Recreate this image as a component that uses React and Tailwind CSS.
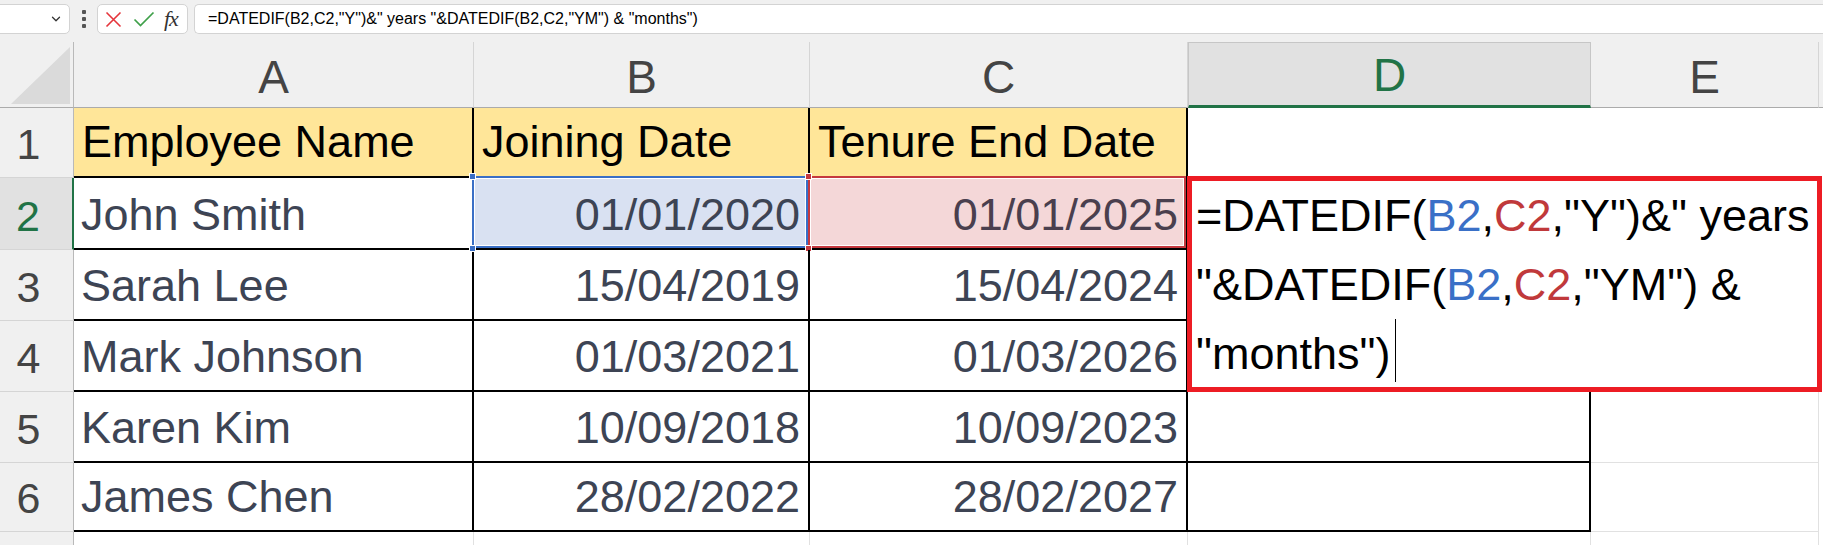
import React from "react";
import { ChevronDown } from "lucide-react";

// Sheet data: name, joining date, tenure end date
const ROWS = [
  ["John Smith", "01/01/2020", "01/01/2025"],
  ["Sarah Lee", "15/04/2019", "15/04/2024"],
  ["Mark Johnson", "01/03/2021", "01/03/2026"],
  ["Karen Kim", "10/09/2018", "10/09/2023"],
  ["James Chen", "28/02/2022", "28/02/2027"],
];

const FORMULA = '=DATEDIF(B2,C2,"Y")&" years "&DATEDIF(B2,C2,"YM") & "months")';

function FormulaBar() {
  return (
    <div className="h-[42px] bg-[#f0f0f0] flex items-start pt-[4px] gap-0">
      <div className="-ml-[6px] w-[76px] h-[30px] bg-white border border-[#d3d3d3] rounded-[5px] flex items-center justify-end pr-[6px]">
        <ChevronDown size={14} strokeWidth={2.2} className="text-[#333]" />
      </div>
      <div className="w-[27px] h-[30px] flex flex-col items-center justify-center gap-[3px]">
        <span className="w-[4px] h-[4px] rounded-[1px] bg-[#555]" />
        <span className="w-[4px] h-[4px] rounded-[1px] bg-[#555]" />
        <span className="w-[4px] h-[4px] rounded-[1px] bg-[#555]" />
      </div>
      <div className="w-[91px] h-[30px] bg-white border border-[#d3d3d3] rounded-[5px] flex items-center pl-[6px]">
        <svg width="17" height="17" viewBox="0 0 17 17" className="ml-[1px]">
          <path d="M1.5 1.5 L15.5 15.5 M15.5 1.5 L1.5 15.5" stroke="#e5353c" strokeWidth="1.6" fill="none" />
        </svg>
        <svg width="22" height="16" viewBox="0 0 22 16" className="ml-[11px]">
          <path d="M1.5 8.5 L7.5 14.5 L20.5 1.5" stroke="#3fa04a" strokeWidth="1.7" fill="none" />
        </svg>
        <span className="ml-[9px] font-['Liberation_Serif',serif] italic text-[22px] leading-none text-[#333] tracking-[-1px]">
          fx
        </span>
      </div>
      <div className="ml-[6px] flex-1 h-[30px] bg-white border border-[#d3d3d3] border-r-0 rounded-l-[5px] flex items-center pl-[13px]">
        <span className="text-[16px] text-black whitespace-nowrap">{FORMULA}</span>
      </div>
    </div>
  );
}

function ColHeader({ letter, active }) {
  return (
    <div
      className={`flex items-end justify-center pb-[4px] text-[46px] leading-[52px] ${
        active
          ? "bg-[#e1e1e1] text-[#217346] border-t border-x border-[#c6c6c6] border-b-[3px] border-b-[#217346]"
          : "bg-[#f0f0f0] text-[#444] border-r border-r-[#d5d5d5] border-b border-b-[#ababab]"
      }`}
    >
      {letter}
    </div>
  );
}

function RowHeader({ n, active }) {
  return (
    <div
      className={`flex items-end justify-center pr-[16px] pb-[7px] text-[43px] leading-[52px] border-b border-b-[#d5d5d5] ${
        active
          ? "bg-[#e1e1e1] text-[#217346] border-r-2 border-r-[#217346]"
          : "bg-[#f0f0f0] text-[#444] border-r border-r-[#b9b9b9]"
      }`}
    >
      {n}
    </div>
  );
}

export default function App() {
  return (
    <div className="w-[1823px] h-[545px] overflow-hidden bg-white font-['Liberation_Sans',Arial,sans-serif]">
      <FormulaBar />

      <div className="grid grid-cols-[74px_400px_336px_378px_403px_228px_1fr] grid-rows-[66px_70px_72px_71px_71px_71px_69px_13px]">
        {/* column headers */}
        <div className="bg-[#f0f0f0] border-r border-r-[#b9b9b9] border-b border-b-[#ababab] flex items-end justify-end pr-[3px] pb-[3px]">
          <svg width="59" height="57" viewBox="0 0 59 57">
            <polygon points="0,57 59,57 59,0" fill="#dadada" />
          </svg>
        </div>
        <ColHeader letter="A" />
        <ColHeader letter="B" />
        <ColHeader letter="C" />
        <ColHeader letter="D" active />
        <ColHeader letter="E" />
        <div className="bg-[#f0f0f0] border-b border-b-[#ababab]" />

        {/* row 1: headings */}
        <RowHeader n={1} />
        {["Employee Name", "Joining Date", "Tenure End Date"].map((h) => (
          <div
            key={h}
            className="bg-[#ffe699] border-r-2 border-b-2 border-black flex items-end pl-[8px] pb-[8px] text-[45px] leading-[52px] text-black whitespace-nowrap"
          >
            {h}
          </div>
        ))}
        <div className="bg-white" />
        <div className="bg-white" />
        <div className="bg-white" />

        {/* rows 2-6 */}
        {ROWS.map(([name, start, end], i) => {
          const n = i + 2;
          const sel = n === 2;
          const under = n >= 2 && n <= 4;
          return (
            <React.Fragment key={n}>
              <RowHeader n={n} active={sel} />
              <div className="border-r-2 border-b-2 border-black flex items-end pl-[7px] pb-[7px] text-[45px] leading-[52px] text-[#3d4454] whitespace-nowrap">
                {name}
              </div>
              <div
                className={`relative border-r-2 border-b-2 border-black flex items-end justify-end pr-[8px] pb-[7px] text-[45px] leading-[52px] text-[#3d4454] ${
                  sel ? "bg-[#d9e1f2]" : ""
                }`}
              >
                {sel && (
                  <>
                    <div className="absolute -left-[2px] -top-[2px] right-0 bottom-0 border-2 border-[#3a6fc6] shadow-[inset_0_0_0_1px_white]" />
                    <div className="absolute -left-[5px] -top-[5px] w-[7px] h-[7px] bg-[#3a6fc6] border border-white" />
                    <div className="absolute -left-[5px] -bottom-[4px] w-[7px] h-[7px] bg-[#3a6fc6] border border-white" />
                  </>
                )}
                <span className="relative">{start}</span>
              </div>
              <div
                className={`relative border-r-2 border-b-2 border-black flex items-end justify-end pr-[8px] pb-[7px] text-[45px] leading-[52px] ${
                  sel ? "bg-[#f4d7d8] text-[#4a3f4e]" : "text-[#3d4454]"
                }`}
              >
                {sel && (
                  <>
                    <div className="absolute -left-[2px] -top-[2px] right-0 bottom-0 border-2 border-[#c5393f] shadow-[inset_0_0_0_1px_white]" />
                    <div className="absolute -left-[5px] -top-[5px] w-[7px] h-[7px] bg-[#c5393f] border border-white" />
                    <div className="absolute -left-[5px] -bottom-[4px] w-[7px] h-[7px] bg-[#c5393f] border border-white" />
                  </>
                )}
                <span className="relative">{end}</span>
              </div>
              {!under && (
                <>
                  <div className="border-r-2 border-b-2 border-black bg-white" />
                  <div className="border-r border-b border-[#e1e1e1] bg-white" />
                </>
              )}
              <div className="bg-white" />
            </React.Fragment>
          );
        })}

        {/* row 7, cut off */}
        <div className="bg-[#f0f0f0] border-r border-r-[#b9b9b9]" />
        <div className="border-r border-[#e1e1e1]" />
        <div className="border-r border-[#e1e1e1]" />
        <div className="border-r border-[#e1e1e1]" />
        <div className="border-r border-[#e1e1e1]" />
        <div className="border-r border-[#e1e1e1]" />
        <div />

        {/* D2 being edited: formula wraps over D2:E4 */}
        <div className="relative z-10 col-start-5 col-span-2 row-start-3 row-span-3 -ml-[1px] -mt-[2px] -mr-[3px] bg-white border-[5px] border-[#ed1c24] pl-[4px] text-[45px] leading-[69px] text-black whitespace-nowrap">
          <div>
            =DATEDIF(<span className="text-[#3a70c7]">B2</span>,<span className="text-[#c0393b]">C2</span>,"Y")&amp;" years
          </div>
          <div>
            "&amp;DATEDIF(<span className="text-[#3a70c7]">B2</span>,<span className="text-[#c0393b]">C2</span>,"YM") &amp;
          </div>
          <div>
            "months")
            <span className="inline-block align-top ml-[4px] w-[1px] h-[63px] bg-black" />
          </div>
        </div>
      </div>
    </div>
  );
}
